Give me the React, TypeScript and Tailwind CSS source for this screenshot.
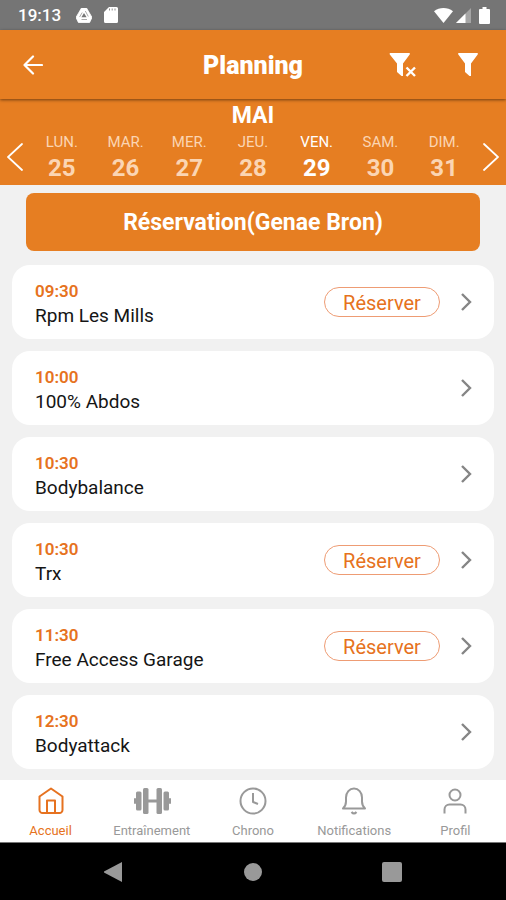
import type { ReactNode } from "react";

const days = [
  { name: "LUN.", date: 25 },
  { name: "MAR.", date: 26 },
  { name: "MER.", date: 27 },
  { name: "JEU.", date: 28 },
  { name: "VEN.", date: 29, active: true },
  { name: "SAM.", date: 30 },
  { name: "DIM.", date: 31 },
];

const classes = [
  { time: "09:30", name: "Rpm Les Mills", bookable: true },
  { time: "10:00", name: "100% Abdos", bookable: false },
  { time: "10:30", name: "Bodybalance", bookable: false },
  { time: "10:30", name: "Trx", bookable: true },
  { time: "11:30", name: "Free Access Garage", bookable: true },
  { time: "12:30", name: "Bodyattack", bookable: false },
];

function StatusBar() {
  return (
    <div className="flex h-[30px] items-center bg-[#757575] px-[18px] text-white">
      <span className="text-[17px] leading-5 font-medium">19:13</span>
      <svg className="ml-[15px] h-[15px] w-4" viewBox="0 0 16 15" fill="currentColor">
        <path d="M5.500 0h5L16 9.400 13.600 14.500H2.400L0 9.400z" stroke="currentColor" strokeWidth=".8" strokeLinejoin="round" />
        <path d="M8 5 10.600 9.300H5.400z" fill="#757575" />
        <path d="M6.200 4.500 3.600 9M9.300 3l3 5.500M5.500 11.500h5.500" fill="none" stroke="#757575" strokeWidth=".6" />
      </svg>
      <svg className="ml-3 h-4 w-3.5" viewBox="0 0 14 16" fill="currentColor">
        <path d="M5 0h7.500A1.500 1.500 0 0 1 14 1.500v13a1.500 1.500 0 0 1-1.500 1.500h-11A1.500 1.500 0 0 1 0 14.500V5z" />
        <path d="M5.500 1.500v2M8.200 1.500v2M11 1.500v2" stroke="#757575" strokeWidth=".8" />
      </svg>
      <svg className="ml-auto h-[15px] w-[19px]" viewBox="0 0 19 15" fill="currentColor">
        <path d="M0 3.300C5.500-1.100 13.500-1.100 19 3.300L9.500 15z" />
      </svg>
      <svg className="ml-[3px] h-[15px] w-[15px]" viewBox="0 0 15 15" fill="currentColor">
        <path d="M15 0v15H0z" opacity=".35" />
        <path d="M9.500 5.500V15H0z" />
      </svg>
      <svg className="mr-[-2px] ml-2 h-[17px] w-[11px]" viewBox="0 0 11 17" fill="currentColor">
        <path d="M3.500 0h4v2H10a1 1 0 0 1 1 1v13a1 1 0 0 1-1 1H1a1 1 0 0 1-1-1V3a1 1 0 0 1 1-1h2.500z" />
      </svg>
    </div>
  );
}

function Header() {
  return (
    <header className="relative z-10 grid h-[69px] grid-cols-[1fr_auto_1fr] items-center bg-[#e67e22] px-[23px] text-white shadow-[0_1px_3px_rgba(0,0,0,0.5)]">
      <button type="button" aria-label="Retour" className="justify-self-start">
        <svg className="h-5 w-5" viewBox="0 0 20 20" fill="none" stroke="currentColor" strokeWidth="2.200" strokeLinecap="round" strokeLinejoin="round">
          <path d="M10 1.500 1.500 10l8.500 8.500M1.500 10H19" />
        </svg>
      </button>
      <h1 className="pt-0.5 text-[25px] leading-8 font-black">Planning</h1>
      <div className="flex items-center justify-self-end pr-1">
        <button type="button" aria-label="Effacer les filtres">
          <svg className="h-[25px] w-7" viewBox="0 0 28 25" fill="currentColor">
            <path d="M1 1h19.500q.8.600.2 1.500L14 11.500V24H12.500L8 20V11.500L.8 2.500Q.2 1.500 1 1z" />
            <path d="m17.500 15.500 8.500 8.500m0-8.500-8.500 8.500" fill="none" stroke="currentColor" strokeWidth="2.400" />
          </svg>
        </button>
        <button type="button" aria-label="Filtrer" className="ml-10">
          <svg className="h-[25px] w-[22px]" viewBox="0 0 22 25" fill="currentColor">
            <path d="M1.500 1h19q.8.600.2 1.500L14 11.500V24H12.500L8 20V11.500L1.300 2.500Q.700 1.500 1.500 1z" />
          </svg>
        </button>
      </div>
    </header>
  );
}

function WeekArrow({ label, path }: { label: string; path: string }) {
  return (
    <button type="button" aria-label={label} className="flex w-[30px] shrink-0 justify-center pt-[30px]">
      <svg className="h-7 w-4" viewBox="0 0 16 28" fill="none" stroke="currentColor" strokeWidth="1.800" strokeLinecap="round">
        <path d={path} />
      </svg>
    </button>
  );
}

function Week() {
  return (
    <section className="flex h-[86px] items-center bg-[#e67e22] text-white">
      <WeekArrow label="Semaine précédente" path="M15 1 1 14l14 13" />
      <div className="flex-1 text-center">
        <h2 className="text-[23px] leading-7 font-bold">MAI</h2>
        <div className="grid grid-cols-7">
          {days.map((d) => (
            <button key={d.date} type="button" className={d.active ? "text-white" : "text-[#fbd5b3]"}>
              <span className="block text-[15px] leading-6">{d.name}</span>
              <span className="block text-2xl leading-7 font-bold">{d.date}</span>
            </button>
          ))}
        </div>
      </div>
      <WeekArrow label="Semaine suivante" path="m1 1 14 13L1 27" />
    </section>
  );
}

function ClassRow({ time, name, bookable }: { time: string; name: string; bookable: boolean }) {
  return (
    <li className="flex h-[74px] items-center rounded-[18px] bg-white pr-[22px] pl-[23px]">
      <div className="flex-1 pt-[3px]">
        <p className="text-[17px] leading-6 font-semibold text-[#e67220]">{time}</p>
        <p className="text-[19px] leading-[26px] text-[#151515]">{name}</p>
      </div>
      {bookable && (
        <button type="button" className="mr-[21px] h-[30px] w-[116px] rounded-full border border-[#ee9c74] pt-0.5 text-xl leading-[26px] text-[#e67220]">
          Réserver
        </button>
      )}
      <button type="button" aria-label={`Détails ${name}`}>
        <svg className="h-5 w-[11px]" viewBox="0 0 11 20" fill="none" stroke="#858585" strokeWidth="2.400">
          <path d="m1 2 8 8-8 8" />
        </svg>
      </button>
    </li>
  );
}

function Tab({ label, active, children }: { label: string; active?: boolean; children: ReactNode }) {
  return (
    <a href="#" className={`flex flex-col items-center gap-1 pt-[5px] ${active ? "text-[#e67220]" : "text-[#999999]"}`}>
      <svg className="h-8 w-10" viewBox="0 0 40 32" fill="none" stroke="currentColor" strokeWidth="2" strokeLinejoin="round">
        {children}
      </svg>
      <span className="text-[13px] leading-5">{label}</span>
    </a>
  );
}

function Tabs() {
  return (
    <nav className="grid h-[62px] grid-cols-5 bg-white">
      <Tab label="Accueil" active>
        <path d="M8.500 11.500 20 3.500l11.500 8V25a3 3 0 0 1-3 3h-17a3 3 0 0 1-3-3z" />
        <path d="M16 28V15.500h8V28" />
      </Tab>
      <Tab label="Entraînement">
        <g fill="currentColor" stroke="none">
          <rect x="11" y="3" width="5.500" height="26" rx="1.500" />
          <rect x="24.500" y="3" width="5.500" height="26" rx="1.500" />
          <rect x="4" y="6.500" width="5.500" height="19" rx="1.500" />
          <rect x="31.500" y="6.500" width="5.500" height="19" rx="1.500" />
          <rect x="16" y="14.500" width="9" height="3" />
          <rect x="2" y="13" width="2" height="6" rx="1" />
          <rect x="37" y="13" width="2" height="6" rx="1" />
        </g>
      </Tab>
      <Tab label="Chrono">
        <circle cx="20" cy="16" r="12.500" />
        <path d="M20 8v9l5 2" />
      </Tab>
      <Tab label="Notifications">
        <path d="M9 23.500h22c-2.500-2.500-3-4-3-7v-4c0-5-3.500-9-8-9s-8 4-8 9v4c0 3-.5 4.500-3 7z" />
        <path d="M17.500 27q2.500 3 5 0" />
      </Tab>
      <Tab label="Profil">
        <circle cx="20" cy="10" r="5.500" />
        <path d="M9.500 28.500v-4a5 5 0 0 1 5-5h11a5 5 0 0 1 5 5v4" />
      </Tab>
    </nav>
  );
}

function SystemBar() {
  return (
    <div className="flex h-[58px] items-center justify-center gap-[120px] border-t border-[#777777] bg-black">
      <button type="button" aria-label="Précédent">
        <svg className="h-5 w-5" viewBox="0 0 20 20" fill="#999999">
          <path d="M18 0v20L0 10.500v-1z" />
        </svg>
      </button>
      <button type="button" aria-label="Accueil système" className="h-[18px] w-[18px] rounded-full bg-[#999999]" />
      <button type="button" aria-label="Applications récentes" className="h-5 w-5 rounded-xs bg-[#999999]" />
    </div>
  );
}

export default function App() {
  return (
    <div className="flex min-h-screen flex-col bg-[#f1f1f1] font-['Roboto',sans-serif]">
      <StatusBar />
      <Header />
      <Week />
      <main className="flex-1 px-3 pt-2 pb-[11px]">
        <div className="px-3.5">
          <button type="button" className="h-[58px] w-full rounded-lg bg-[#e67e22] pt-[3px] text-[23px] font-bold text-white">
            Réservation(Genae Bron)
          </button>
        </div>
        <ul className="mt-3.5 flex flex-col gap-3">
          {classes.map((c) => (
            <ClassRow key={c.name} {...c} />
          ))}
        </ul>
      </main>
      <Tabs />
      <SystemBar />
    </div>
  );
}
